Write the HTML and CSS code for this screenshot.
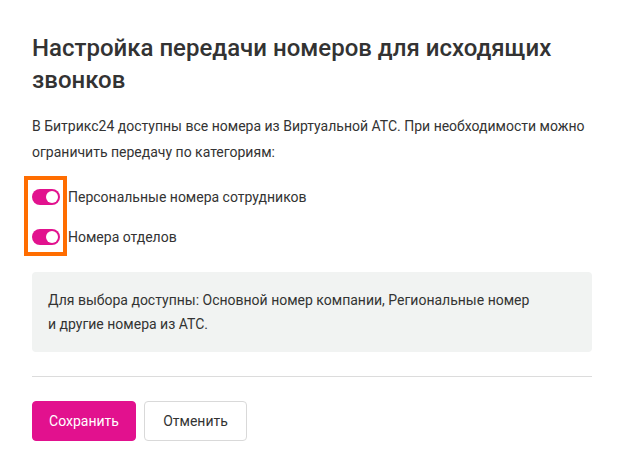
FILE: index.html
```html
<!DOCTYPE html>
<html lang="ru">
<head>
<meta charset="utf-8">
<link rel="stylesheet" href="styles.css">
</head>
<body>
<div class="page">
  <h1 class="title">Настройка передачи номеров для исходящих звонков</h1>
  <p class="intro">В Битрикс24 доступны все номера из Виртуальной АТС. При необходимости можно ограничить передачу по категориям:</p>
  <div class="options">
    <div class="highlight"></div>
    <label class="option"><span class="toggle"><span class="knob"></span></span><span class="option-label">Персональные номера сотрудников</span></label>
    <label class="option"><span class="toggle"><span class="knob"></span></span><span class="option-label">Номера отделов</span></label>
  </div>
  <div class="note">Для выбора доступны: Основной номер компании, Региональные номер<br>и другие номера из АТС.</div>
  <hr class="divider">
  <div class="actions">
    <button class="btn btn-primary">Сохранить</button>
    <button class="btn btn-secondary">Отменить</button>
  </div>
</div>
</body>
</html>
```

FILE: styles.css
```css
* { box-sizing: border-box; }
html, body { margin: 0; padding: 0; background: #fff; }
body {
  font-family: Roboto, "Liberation Sans", sans-serif;
  color: #333;
}
.page {
  width: 624px;
  padding: 32px;
}
.title {
  margin: 0;
  font-size: 24px;
  line-height: 32px;
  font-weight: 500;
  color: #333;
}
.intro {
  margin: 17px 0 0;
  font-size: 14px;
  line-height: 26px;
}
.options {
  position: relative;
  margin-top: 18px;
  display: flex;
  flex-direction: column;
  gap: 12px;
}
.highlight {
  position: absolute;
  left: -8px;
  top: -7px;
  width: 43px;
  height: 80px;
  border: 4px solid #ff6d00;
  pointer-events: none;
}
.option {
  display: flex;
  align-items: center;
  height: 28px;
  font-size: 14px;
  line-height: 20px;
}
.toggle {
  position: relative;
  width: 28px;
  height: 16px;
  border-radius: 8px;
  background: #e2128e;
  flex: none;
}
.knob {
  position: absolute;
  right: 2px;
  top: 2px;
  width: 12px;
  height: 12px;
  border-radius: 50%;
  background: #fff;
}
.option-label {
  margin-left: 8px;
}
.note {
  margin-top: 21px;
  background: #f1f3f2;
  border-radius: 4px;
  padding: 16px;
  font-size: 14px;
  line-height: 24px;
}
.divider {
  margin: 24px 0 0;
  border: 0;
  border-top: 1px solid #dcdcdc;
}
.actions {
  margin-top: 24px;
  display: flex;
  gap: 8px;
}
.btn {
  height: 40px;
  padding: 0 16px;
  border-radius: 4px;
  font-family: Roboto, "Liberation Sans", sans-serif;
  font-size: 14px;
  font-weight: 400;
  cursor: pointer;
}
.btn-primary {
  width: 104px;
  background: #e2118e;
  color: #fff;
  border: 1px solid #e2118e;
}
.btn-secondary {
  width: 103px;
  background: #fff;
  color: #333;
  border: 1px solid #d9d9d9;
}
```
